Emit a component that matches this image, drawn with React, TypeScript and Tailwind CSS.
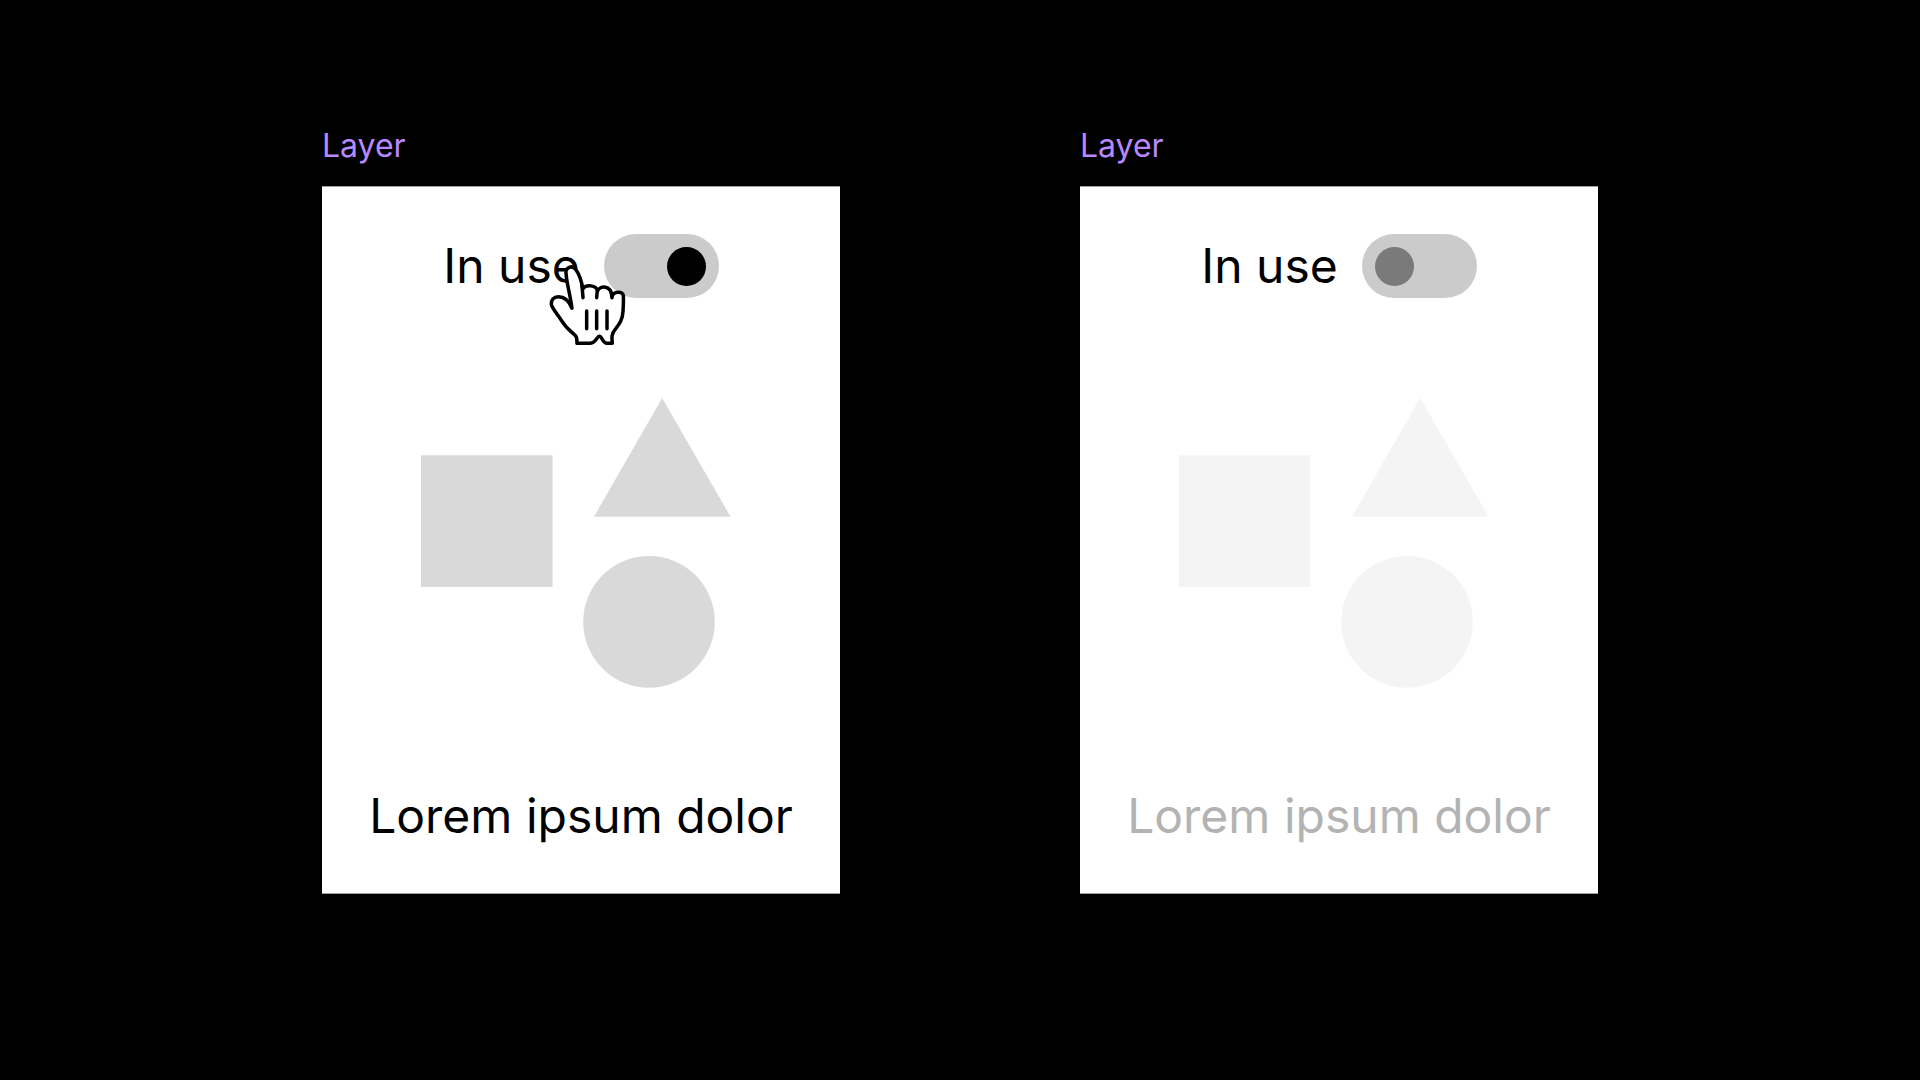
import { useState } from "react";

function HandCursor() {
  return (
    <svg
      viewBox="45 44 246 258"
      className="pointer-events-none absolute left-[102px] top-[26px] h-[86px] w-[82px]"
      fill="none"
      stroke="black"
      strokeWidth="10.5"
      strokeLinecap="round"
      strokeLinejoin="round"
      aria-hidden="true"
    >
      <path
        fill="white"
        d="M126 189 C120 173 108 154 85 154 C71 154 63 164 64 177 C66 188 80 204 92 222 C103 240 114 252 130 265 C143 276 140 280 141 294 L179 294 C198 294 200 273 208 273 C217 273 217 294 231 294 L247 294 C245 277 244 266 255 253 C267 237 278 224 279 198 C280 181 281 167 280 151 C279 136 251 138 246 153 C243 117 209 121 203 137 C199 119 168 116 158 131 C156 111 147 84 137 72 C126 58 106 66 108 84 C111 119 120 145 126 189 Z"
      />
      <path d="M156 120 L159 157 M202 134 L200 157 M244 143 L246 157" />
      <path d="M170 197 V250 M200 197 V250 M231 197 V250" />
    </svg>
  );
}

function Shapes({ active }: { active: boolean }) {
  return (
    <svg
      viewBox="0 0 320 290"
      className={
        active
          ? "mt-[100px] mb-[98px] h-[290px] w-80 fill-[#d9d9d9]"
          : "mt-[100px] mb-[98px] h-[290px] w-80 fill-[#f4f4f4]"
      }
      aria-hidden="true"
    >
      <rect x="0" y="57.3" width="131.6" height="131.6" />
      <path d="M241.2 0 L309.5 118.7 H173 Z" />
      <circle cx="228" cy="223.9" r="65.8" />
    </svg>
  );
}

function LayerCard({ id, initial, pointer }: { id: string; initial: boolean; pointer?: boolean }) {
  const [on, setOn] = useState(initial);
  return (
    <section className="w-full max-w-[518px]">
      <h2 className="mb-5 text-[32px] leading-10 text-[#b888ff]">Layer</h2>
      <div className="flex flex-col items-center border-y border-neutral-400 bg-white py-[47px] text-5xl text-black">
        <div className="relative flex items-center gap-6">
          <label htmlFor={id} className="leading-[60px]">
            In use
          </label>
          <input
            id={id}
            type="checkbox"
            role="switch"
            checked={on}
            onChange={(e) => setOn(e.target.checked)}
            className="flex h-16 w-[115px] appearance-none items-center rounded-full bg-[#cbcbcb] px-[13px] before:size-[39px] before:rounded-full before:bg-[#7a7a7a] checked:justify-end checked:before:bg-black"
          />
          {pointer && <HandCursor />}
        </div>
        <Shapes active={on} />
        <p className={on ? "leading-[60px]" : "leading-[60px] text-[#b3b3b3]"}>Lorem ipsum dolor</p>
      </div>
    </section>
  );
}

export default function App() {
  return (
    <main className="flex min-h-screen items-start justify-center gap-[240px] bg-black pt-[126px] font-['Inter',sans-serif]">
      <LayerCard id="in-use-on" initial pointer />
      <LayerCard id="in-use-off" initial={false} />
    </main>
  );
}
